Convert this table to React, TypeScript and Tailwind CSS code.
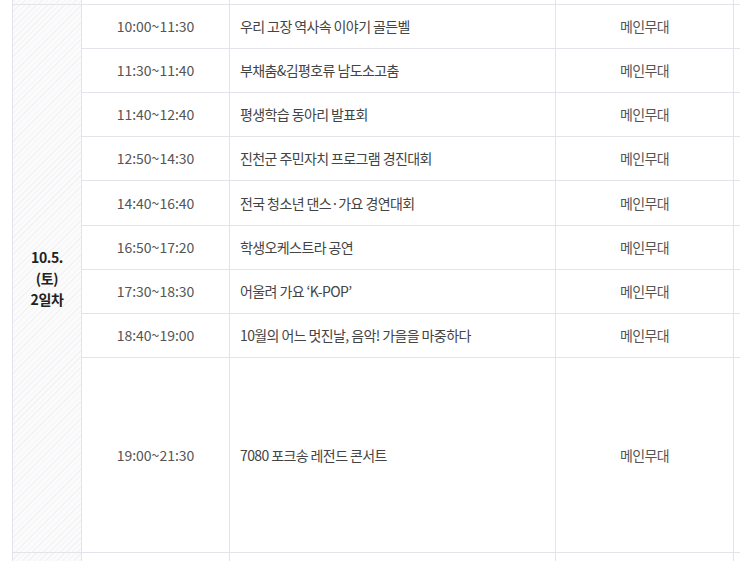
const rows = [
  { time: '10:00~11:30', title: '우리 고장 역사속 이야기 골든벨', h: 'h-[44px]' },
  { time: '11:30~11:40', title: '부채춤&김평호류 남도소고춤', h: 'h-[44px]' },
  { time: '11:40~12:40', title: '평생학습 동아리 발표회', h: 'h-[44px]' },
  { time: '12:50~14:30', title: '진천군 주민자치 프로그램 경진대회', h: 'h-[44px]' },
  { time: '14:40~16:40', title: '전국 청소년 댄스·가요 경연대회', h: 'h-[45px]' },
  { time: '16:50~17:20', title: '학생오케스트라 공연', h: 'h-[44px]' },
  { time: '17:30~18:30', title: '어울려 가요 ‘K-POP’', h: 'h-[44px]' },
  { time: '18:40~19:00', title: '10월의 어느 멋진날, 음악! 가을을 마중하다', h: 'h-[44px]' },
  { time: '19:00~21:30', title: '7080 포크송 레전드 콘서트', h: 'h-[195px]' },
];

const hatch =
  'bg-[repeating-linear-gradient(135deg,#f3f3f5_0px,#f3f3f5_1px,#fbfbfb_1px,#fbfbfb_4px)]';
const cell = 'border-r border-b border-[#e3e3e9] flex items-center';

export default function App() {
  return (
    <div
      className="w-[740px] h-[561px] overflow-hidden bg-white text-[14px]"
      style={{ fontFamily: '"Noto Sans CJK KR", "Noto Sans", sans-serif' }}
    >
      <div className="pl-[12px] -mt-[39px] w-[900px]">
        <div className="grid grid-cols-[70px_148px_326px_178px_160px]">
          {/* previous row */}
          <div className={`${cell} ${hatch} border-l h-[44px]`} />
          <div className={`${cell} h-[44px]`} />
          <div className={`${cell} h-[44px]`} />
          <div className={`${cell} h-[44px]`} />
          <div className={`${cell} h-[44px]`} />

          <div
            className={`${cell} ${hatch} border-l justify-center text-center font-bold text-[#222] leading-[21px] tracking-[-0.4px]`}
            style={{ gridRow: 'span 9 / span 9' }}
          >
            <div>
              10.5.
              <br />
              (토)
              <br />
              2일차
            </div>
          </div>
          {rows.map((r) => (
            <div key={r.time} className="contents">
              <div className={`${cell} ${r.h} justify-center text-[#555]`}>{r.time}</div>
              <div className={`${cell} ${r.h} pl-[10px] text-[#444] tracking-[-0.6px]`}>{r.title}</div>
              <div className={`${cell} ${r.h} justify-center text-[#555] tracking-[-0.6px]`}>메인무대</div>
              <div className={`${cell} ${r.h}`} />
            </div>
          ))}

          {/* next row */}
          <div className={`${cell} ${hatch} border-l h-[44px]`} />
          <div className={`${cell} h-[44px]`} />
          <div className={`${cell} h-[44px]`} />
          <div className={`${cell} h-[44px]`} />
          <div className={`${cell} h-[44px]`} />
        </div>
      </div>
    </div>
  );
}
